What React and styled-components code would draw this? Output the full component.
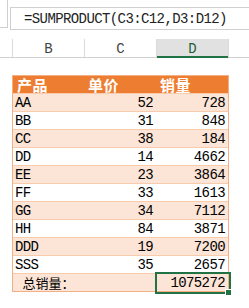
import React from 'react'
import styled, { createGlobalStyle } from 'styled-components'

const GlobalStyle = createGlobalStyle`
  html, body {
    margin: 0;
    padding: 0;
    background: #fff;
  }
  body {
    width: 249px;
    height: 308px;
    overflow: hidden;
  }
`

const mono = `"Liberation Mono", "Noto Sans CJK SC", monospace`

const Sheet = styled.div`
  width: 249px;
  height: 308px;
  background: #fff;
  font-family: ${mono};
`

const FormulaRow = styled.div`
  display: flex;
  align-items: flex-start;
  height: 39px;
`

const NameBox = styled.div`
  width: 7px;
  height: 27px;
  border-right: 1px solid #d0d0d0;
  border-bottom: 1px solid #d0d0d0;
`

const FormulaBox = styled.div`
  flex: 1;
  margin: 7px 0 0 2px;
  height: 23px;
  box-sizing: border-box;
  border: 1px solid #d0d0d0;
  border-right: 0;
  padding-left: 13px;
  display: flex;
  align-items: center;
  font-size: 14px;
  letter-spacing: -0.6px;
  color: #222;
  white-space: nowrap;
`

const ColumnHeads = styled.div`
  display: grid;
  grid-template-columns: 12px 72px 72px 72px 1fr;
  height: 19px;
  box-sizing: border-box;
  border-bottom: 1px solid #d0d0d0;
`

const ColumnHead = styled.div`
  border-left: ${p => (p.$first ? '0' : '1px solid #dadada')};
  background: ${p => (p.$active ? '#e1e1e1' : '#fff')};
  color: ${p => (p.$active ? '#1d5d3a' : '#444')};
  box-shadow: ${p => (p.$active ? 'inset 0 -2px 0 #217346' : 'none')};
  margin-bottom: ${p => (p.$active ? '-1px' : '0')};
  display: flex;
  align-items: center;
  justify-content: center;
  font-size: 14px;
  padding-top: 1px;
`

const Table = styled.div`
  margin: 17px 0 0 12px;
  width: 217px;
  box-sizing: border-box;
  border: 1px solid #f4b084;
  border-bottom: 0;
`

const Row = styled.div`
  display: grid;
  grid-template-columns: 71px 72px 72px;
  height: 18px;
  box-sizing: border-box;
  border-bottom: 1px solid #f8cbad;
  background: ${p => p.$bg};
  ${p => p.$last && 'border-bottom-color: #f4b084;'}
`

const HeadCell = styled.div`
  color: #fff;
  font-family: "Noto Sans CJK SC", sans-serif;
  font-weight: 700;
  font-size: 15px;
  line-height: 17px;
  padding-left: 4px;
  letter-spacing: 0.5px;
`

const Cell = styled.div`
  position: relative;
  font-size: 14px;
  letter-spacing: -0.6px;
  line-height: 18px;
  color: #000;
  white-space: nowrap;
  text-align: ${p => (p.$num ? 'right' : 'left')};
  padding: ${p => (p.$num ? '0 3px 0 0' : '0 0 0 2px')};
`

const TotalLabel = styled.div`
  font-family: "Noto Sans CJK SC", sans-serif;
  font-size: 13px;
  line-height: 17px;
  text-align: center;
  color: #000;
`

const Selection = styled.div`
  position: absolute;
  top: -2px;
  left: -1px;
  right: -3px;
  bottom: -2px;
  border: 2px solid #217346;
  pointer-events: none;
`

const FillHandle = styled.div`
  position: absolute;
  right: -4px;
  bottom: -4px;
  width: 5px;
  height: 5px;
  background: #217346;
  border: 1px solid #fff;
`

const rows = [
  ['AA', 52, 728],
  ['BB', 31, 848],
  ['CC', 38, 184],
  ['DD', 14, 4662],
  ['EE', 23, 3864],
  ['FF', 33, 1613],
  ['GG', 34, 7112],
  ['HH', 84, 3871],
  ['DDD', 19, 7200],
  ['SSS', 35, 2657],
]

const total = rows.reduce((sum, r) => sum + r[1] * r[2], 0)

export default function App() {
  return (
    <Sheet>
      <GlobalStyle />
      <FormulaRow>
        <NameBox />
        <FormulaBox>=SUMPRODUCT(C3:C12,D3:D12)</FormulaBox>
      </FormulaRow>
      <ColumnHeads>
        <ColumnHead $first />
        <ColumnHead>B</ColumnHead>
        <ColumnHead>C</ColumnHead>
        <ColumnHead $active>D</ColumnHead>
        <ColumnHead />
      </ColumnHeads>
      <Table>
        <Row $bg="#ed7d31">
          <HeadCell>产品</HeadCell>
          <HeadCell>单价</HeadCell>
          <HeadCell>销量</HeadCell>
        </Row>
        {rows.map((r, i) => (
          <Row key={r[0]} $bg={i % 2 === 0 ? '#fce4d6' : '#fff'}>
            <Cell>{r[0]}</Cell>
            <Cell $num>{r[1]}</Cell>
            <Cell $num>{r[2]}</Cell>
          </Row>
        ))}
        <Row $bg="#fce4d6" $last>
          <TotalLabel>总销量：</TotalLabel>
          <Cell />
          <Cell $num>
            {total}
            <Selection />
            <FillHandle />
          </Cell>
        </Row>
      </Table>
    </Sheet>
  )
}
